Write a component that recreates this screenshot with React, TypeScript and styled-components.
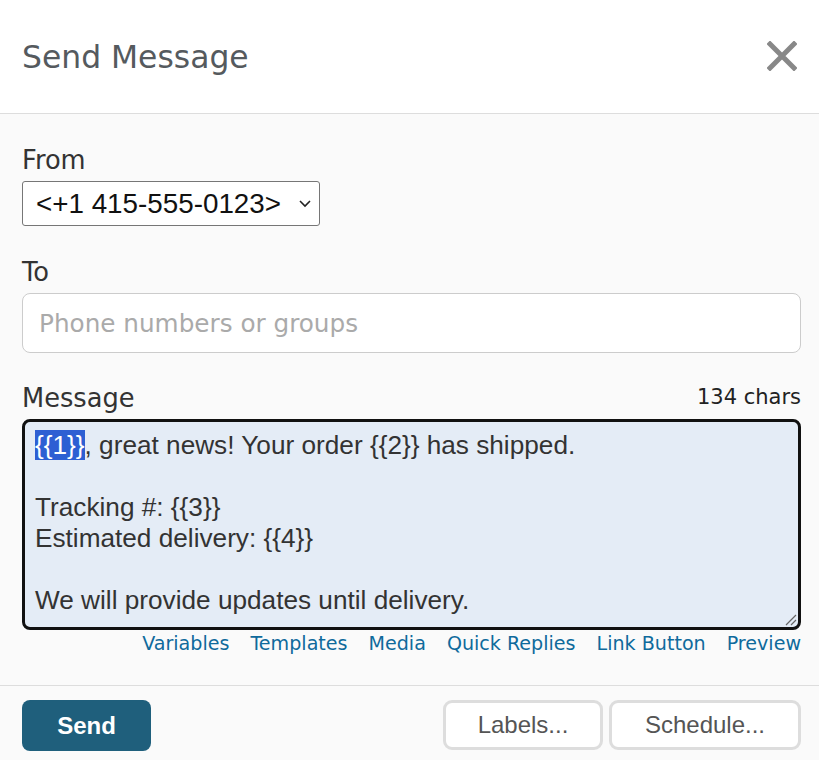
import React from "react";
import styled, { createGlobalStyle } from "styled-components";

const Global = createGlobalStyle`
  html, body { margin: 0; padding: 0; background: #ffffff; }
  body { font-family: "DejaVu Sans", Verdana, sans-serif; }
  * { box-sizing: border-box; }
`;

const Dialog = styled.div`
  width: 819px;
  height: 760px;
  display: flex;
  flex-direction: column;
  background: #fafafa;
  overflow: hidden;
`;

const Header = styled.header`
  height: 114px;
  flex: none;
  display: flex;
  align-items: center;
  justify-content: space-between;
  padding: 0 22px 0 22px;
  background: #ffffff;
  border-bottom: 1px solid #dddddd;
`;

const Title = styled.h1`
  margin: 0;
  font-family: "DejaVu Sans", Verdana, sans-serif;
  font-weight: normal;
  font-size: 31.4px;
  color: #555a5e;
`;

const CloseButton = styled.button`
  width: 32px;
  height: 32px;
  border: 0;
  padding: 0;
  background: transparent;
  display: flex;
  align-items: center;
  justify-content: center;
  margin-right: -1px;
  margin-top: -2px;
`;

const Body = styled.div`
  flex: 1;
  display: flex;
  flex-direction: column;
  padding: 31px 18px 0 22px;
`;

const Label = styled.div`
  font-family: "DejaVu Sans", Verdana, sans-serif;
  font-size: 25.7px;
  line-height: 30px;
  color: #333;
  margin-bottom: 6px;
`;

const Field = styled.div<{ $gap?: number }>`
  display: flex;
  flex-direction: column;
  margin-bottom: ${(p) => p.$gap ?? 0}px;
`;

const SelectBox = styled.div`
  align-self: flex-start;
  display: flex;
  align-items: center;
  gap: 17px;
  height: 45px;
  padding: 0 7px 0 13px;
  border: 1px solid #767676;
  border-radius: 3px;
  background: #ffffff;
  font-family: "Liberation Sans", Arial, sans-serif;
  font-size: 27.8px;
  color: #111;
`;

const TextInput = styled.div`
  height: 60px;
  display: flex;
  align-items: center;
  padding: 0 16px;
  border: 1px solid #cccccc;
  border-radius: 8px;
  background: #ffffff;
  font-family: "DejaVu Sans", Verdana, sans-serif;
  font-size: 24.7px;
  color: #aaaaaa;
`;

const MessageHead = styled.div`
  display: flex;
  align-items: center;
  justify-content: space-between;
  margin-bottom: 6px;
`;

const HeadLabel = styled(Label)`
  margin-bottom: 0;
`;

const Counter = styled.span`
  font-family: "DejaVu Sans", Verdana, sans-serif;
  font-size: 21px;
  color: #222;
  margin-top: -2px;
`;

const TextArea = styled.div`
  position: relative;
  height: 211px;
  padding: 8px 10px;
  border: 3px solid #111111;
  border-radius: 8px;
  background: #e4ecf6;
  font-family: "Liberation Sans", Arial, sans-serif;
  font-size: 26.2px;
  line-height: 31px;
  color: #333;
  white-space: pre-wrap;
`;

const Selected = styled.span`
  background: #2d5fd3;
  color: #ffffff;
`;

const Grip = styled.svg`
  position: absolute;
  right: 1px;
  bottom: 1px;
`;

const Links = styled.nav`
  display: flex;
  justify-content: flex-end;
  gap: 21px;
  margin-top: 2px;
`;

const LinkItem = styled.a`
  font-family: "DejaVu Sans", Verdana, sans-serif;
  font-size: 19.1px;
  line-height: 24px;
  color: #0f6a9c;
  text-decoration: none;
`;

const Footer = styled.footer`
  flex: none;
  height: 75px;
  display: flex;
  align-items: flex-start;
  padding: 14px 18px 0 22px;
  border-top: 1px solid #dddddd;
  background: #fafafa;
`;

const SendButton = styled.button`
  width: 129px;
  height: 51px;
  border: 0;
  border-radius: 8px;
  background: #1f5f7c;
  color: #ffffff;
  font-family: "Liberation Sans", Arial, sans-serif;
  font-weight: bold;
  font-size: 24px;
`;

const Spacer = styled.div`
  flex: 1;
`;

const GhostButton = styled.button<{ $w: number }>`
  width: ${(p) => p.$w}px;
  height: 50px;
  margin-left: 6px;
  border: 3px solid #dddddd;
  border-radius: 9px;
  background: #ffffff;
  color: #555;
  font-family: "Liberation Sans", Arial, sans-serif;
  font-size: 24px;
`;

export default function App() {
  return (
    <>
      <Global />
      <Dialog>
        <Header>
          <Title>Send Message</Title>
          <CloseButton aria-label="Close">
            <svg width="30" height="30" viewBox="0 0 30 30">
              <path d="M3 3 L27 27 M27 3 L3 27" stroke="#888" strokeWidth="5" strokeLinecap="square" />
            </svg>
          </CloseButton>
        </Header>
        <Body>
          <Field $gap={31}>
            <Label>From</Label>
            <SelectBox>
              <span>&lt;+1 415-555-0123&gt;</span>
              <svg width="14" height="10" viewBox="0 0 14 10">
                <path d="M2 2 L7 7 L12 2" stroke="#222" strokeWidth="1.6" fill="none" />
              </svg>
            </SelectBox>
          </Field>
          <Field $gap={30}>
            <Label>To</Label>
            <TextInput>Phone numbers or groups</TextInput>
          </Field>
          <Field>
            <MessageHead>
              <HeadLabel>Message</HeadLabel>
              <Counter>134 chars</Counter>
            </MessageHead>
            <TextArea>
              <Selected>{"{{1}}"}</Selected>
              {", great news! Your order {{2}} has shipped.\n\nTracking #: {{3}}\nEstimated delivery: {{4}}\n\nWe will provide updates until delivery."}
              <Grip width="14" height="14" viewBox="0 0 14 14">
                <path d="M13 3 L3 13 M13 8 L8 13" stroke="#666" strokeWidth="1.2" />
              </Grip>
            </TextArea>
            <Links>
              <LinkItem>Variables</LinkItem>
              <LinkItem>Templates</LinkItem>
              <LinkItem>Media</LinkItem>
              <LinkItem>Quick Replies</LinkItem>
              <LinkItem>Link Button</LinkItem>
              <LinkItem>Preview</LinkItem>
            </Links>
          </Field>
        </Body>
        <Footer>
          <SendButton>Send</SendButton>
          <Spacer />
          <GhostButton $w={160}>Labels...</GhostButton>
          <GhostButton $w={192}>Schedule...</GhostButton>
        </Footer>
      </Dialog>
    </>
  );
}
